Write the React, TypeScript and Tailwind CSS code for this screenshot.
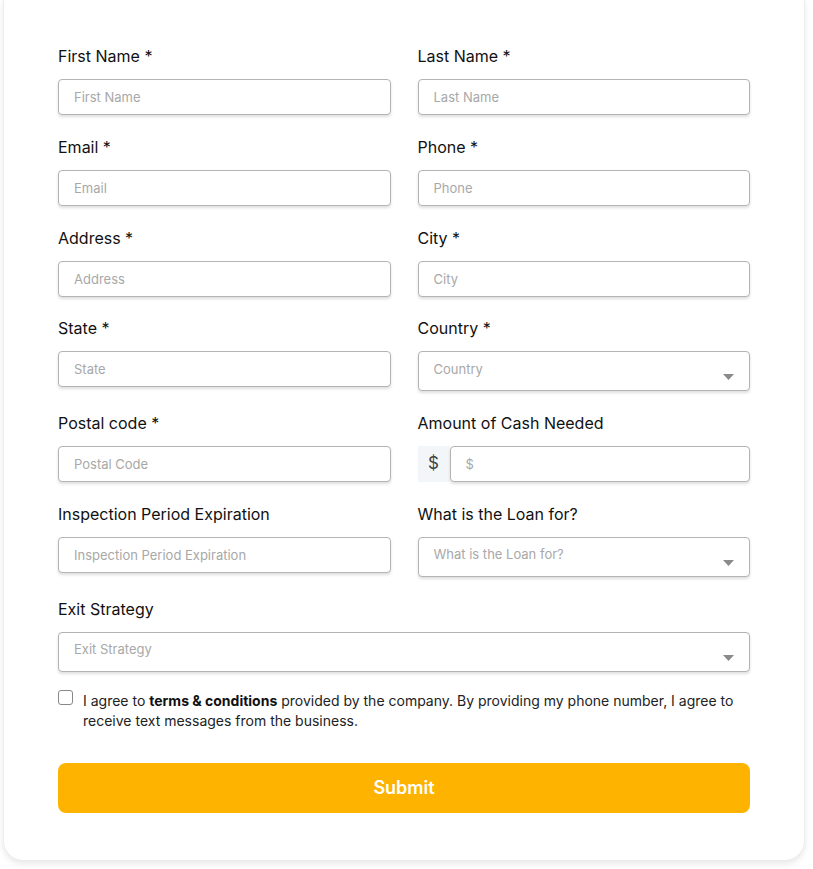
import { useState } from 'react'

type Field = {
  label: string
  placeholder: string
  kind?: 'input' | 'select' | 'money'
  full?: boolean
}

const fields: Field[] = [
  { label: 'First Name *', placeholder: 'First Name' },
  { label: 'Last Name *', placeholder: 'Last Name' },
  { label: 'Email *', placeholder: 'Email' },
  { label: 'Phone *', placeholder: 'Phone' },
  { label: 'Address *', placeholder: 'Address' },
  { label: 'City *', placeholder: 'City' },
  { label: 'State *', placeholder: 'State' },
  { label: 'Country *', placeholder: 'Country', kind: 'select' },
  { label: 'Postal code *', placeholder: 'Postal Code' },
  { label: 'Amount of Cash Needed', placeholder: '$', kind: 'money' },
  { label: 'Inspection Period Expiration', placeholder: 'Inspection Period Expiration' },
  { label: 'What is the Loan for?', placeholder: 'What is the Loan for?', kind: 'select' },
  { label: 'Exit Strategy', placeholder: 'Exit Strategy', kind: 'select', full: true },
]

const boxClass =
  'w-full rounded-[4px] border border-[#b4b4b4] bg-white px-[15px] text-[13px] text-[#333] shadow-[0_2px_3px_rgba(0,0,0,0.13)] outline-none placeholder:text-[#a8a8a8]'

const SelectBox = ({ placeholder }: { placeholder: string }) => (
  <div className="relative">
    <select defaultValue="" className={`${boxClass} h-[40px] appearance-none pb-[4px] text-[#a8a8a8]`}>
      <option value="" disabled>
        {placeholder}
      </option>
    </select>
    {/* little caret in bottom right */}
    <svg
      className="pointer-events-none absolute right-[16px] bottom-[11px]"
      width="11"
      height="6"
      viewBox="0 0 11 6"
    >
      <path d="M0 0 L11 0 L5.5 6 Z" fill="#8a8a8a" />
    </svg>
  </div>
)

const App = () => {
  const [agreed, setAgreed] = useState(false)

  return (
    <div className="min-h-[869px] bg-white font-['Inter','Liberation_Sans',sans-serif] text-[#111]">
      <div className="ml-[3px] w-[802px] rounded-b-[20px] border-x border-b border-[#ececec] bg-white px-[54px] pt-[44px] pb-[47px] shadow-[0_3px_6px_rgba(0,0,0,0.09)]">
        <form className="grid grid-cols-2 gap-x-[27px] gap-y-[19.8px]" onSubmit={(e) => e.preventDefault()}>
          {fields.map((f) => (
            <div key={f.label} className={f.full ? 'col-span-2' : ''}>
              <label className="mb-[11px] block text-base leading-6">{f.label}</label>
              {f.kind === 'select' ? (
                <SelectBox placeholder={f.placeholder} />
              ) : f.kind === 'money' ? (
                <div className="flex">
                  <span className="flex h-[36px] w-[32px] shrink-0 items-center justify-center bg-[#f2f6f9] text-[17px] text-[#444]">
                    $
                  </span>
                  <input className={`${boxClass} h-[36px]`} placeholder={f.placeholder} />
                </div>
              ) : (
                <input className={`${boxClass} h-[36px]`} placeholder={f.placeholder} />
              )}
            </div>
          ))}

          <label className="col-span-2 mt-[-1px] flex items-start gap-[10px] text-sm leading-5 text-[#222]">
            <input
              type="checkbox"
              checked={agreed}
              onChange={(e) => setAgreed(e.target.checked)}
              className="mt-[-1px] h-[15px] w-[15px] shrink-0 appearance-none rounded-[3px] border border-[#888] bg-white"
            />
            <span>
              I agree to <b className="font-bold text-[#111]">terms &amp; conditions</b> provided by the company. By
              providing my phone number, I agree to receive text messages from the business.
            </span>
          </label>

          <button
            type="submit"
            className="col-span-2 mt-[13px] h-[50px] rounded-lg bg-[#fdb300] text-lg font-semibold text-white"
          >
            Submit
          </button>
        </form>
      </div>
    </div>
  )
}

export default App
